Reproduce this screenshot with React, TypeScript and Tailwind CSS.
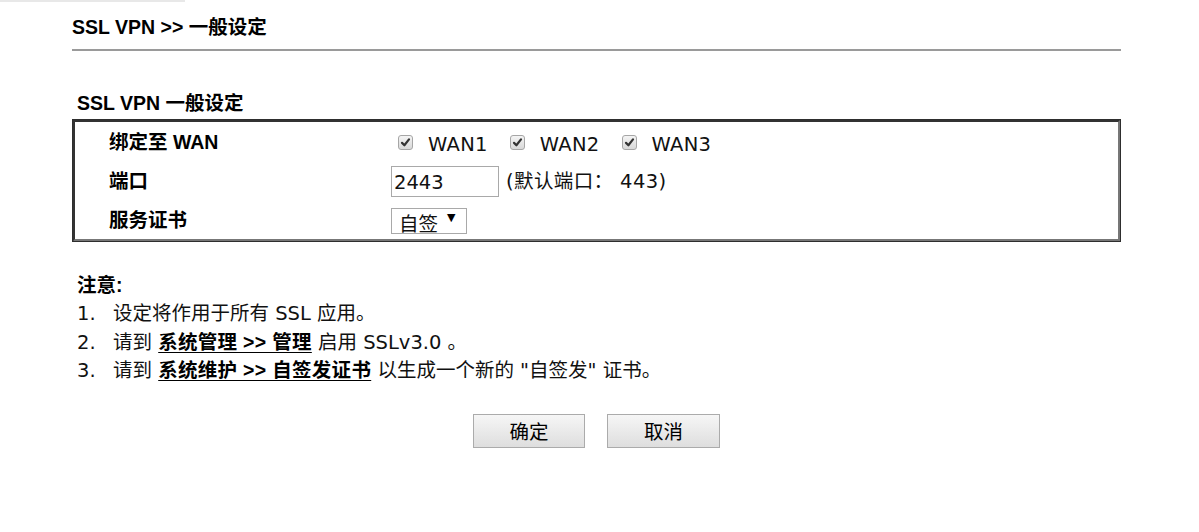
import React from 'react';

const bold = "font-['Liberation_Sans','Noto_Sans_CJK_SC',sans-serif] font-bold";

function Check() {
  return (
    <span className="inline-flex h-[15px] w-[15px] items-center justify-center rounded-[3px] border border-[#a6a6a6] bg-gradient-to-b from-[#f4f4f4] to-[#d8d8d8]">
      <svg viewBox="0 0 12 12" className="h-[11px] w-[11px]">
        <path d="M2.2 6.4 L4.8 9 L9.8 2.6" fill="none" stroke="#333" strokeWidth="2.4" strokeLinecap="round" strokeLinejoin="round" />
      </svg>
    </span>
  );
}

function Row({ label, children }: { label: string; children: React.ReactNode }) {
  return (
    <div className="flex h-[39px] items-center">
      <div className={`${bold} w-[316px] pl-[34px] text-black`}>{label}</div>
      <div className="flex items-center">{children}</div>
    </div>
  );
}

export default function App() {
  const wans = ['WAN1', 'WAN2', 'WAN3'];

  return (
    <div className="h-[532px] w-[1199px] bg-white font-['DejaVu_Sans','Noto_Sans_CJK_SC',sans-serif] text-[19.5px] leading-[1.2] text-[#111]">
      <div className="h-[2px] w-[185px] bg-[#e8e8e8]" />
      <div className="ml-[72px] w-[1049px]">
        {/* Header */}
        <div className={`${bold} flex h-[47px] items-center pt-[4px] text-black`}>SSL VPN &gt;&gt; 一般设定</div>
        <div className="h-[2px] bg-[#9a9a9a]" />

        {/* Section title */}
        <div className={`${bold} mt-[38px] flex h-[30px] items-center pl-[5px] text-black`}>SSL VPN 一般设定</div>

        {/* Settings table */}
        <div className="border border-[#2e2e2e]">
          <div className="h-[121px] border-2 border-t-[#333] border-l-[#333] border-r-[#777] border-b-[#777] pt-[1px]">
            <Row label="绑定至 WAN">
              {wans.map((w, i) => (
                <span key={w} className={`flex items-center ${i === 0 ? 'ml-[7px]' : 'ml-[22px]'}`}>
                  <Check />
                  <span className="ml-[15px] pt-[4px] tracking-[0.3px]">{w}</span>
                </span>
              ))}
            </Row>
            <Row label="端口">
              <div className="flex h-[31px] w-[108px] items-center border border-[#a9a9a9] pl-[2px] pt-[2px]">2443</div>
              <span className="ml-[7px] tracking-[0.4px]">(默认端口： 443)</span>
            </Row>
            <Row label="服务证书">
              <div className="flex h-[26px] w-[76px] items-end border border-[#a9a9a9] pl-[7px]">
                <span className="leading-none translate-y-[2px]">自签</span>
                <span className="ml-[9px] mb-[10px] text-[11px] leading-none text-black">▼</span>
              </div>
            </Row>
          </div>
        </div>

        {/* Notes */}
        <div className="mt-[29px] pl-[5px]">
          <div className={`${bold} flex h-[28.5px] items-center text-black`}>注意:</div>
          <div className="flex h-[28.5px] items-center">
            <span className="w-[36px]">1.</span>
            <span>设定将作用于所有 SSL 应用。</span>
          </div>
          <div className="flex h-[28.5px] items-center">
            <span className="w-[36px]">2.</span>
            <span>
              请到 <a className={`${bold} text-black underline underline-offset-[3px] tracking-[0.3px]`}>系统管理 &gt;&gt; 管理</a> 启用 SSLv3.0 。
            </span>
          </div>
          <div className="flex h-[28.5px] items-center">
            <span className="w-[36px]">3.</span>
            <span>
              请到 <a className={`${bold} text-black underline underline-offset-[3px] tracking-[0.3px]`}>系统维护 &gt;&gt; 自签发证书</a> 以生成一个新的 "自签发" 证书。
            </span>
          </div>
        </div>

        {/* Buttons */}
        <div className="mt-[29px] flex justify-center gap-[22px]">
          <button className="h-[34px] w-[112px] border border-[#ababab] bg-gradient-to-b from-[#f6f6f6] to-[#dedede] font-['Noto_Sans_CJK_SC',sans-serif] text-[19.5px] text-black">确定</button>
          <button className="h-[34px] w-[113px] border border-[#ababab] bg-gradient-to-b from-[#f6f6f6] to-[#dedede] font-['Noto_Sans_CJK_SC',sans-serif] text-[19.5px] text-black">取消</button>
        </div>
      </div>
    </div>
  );
}
